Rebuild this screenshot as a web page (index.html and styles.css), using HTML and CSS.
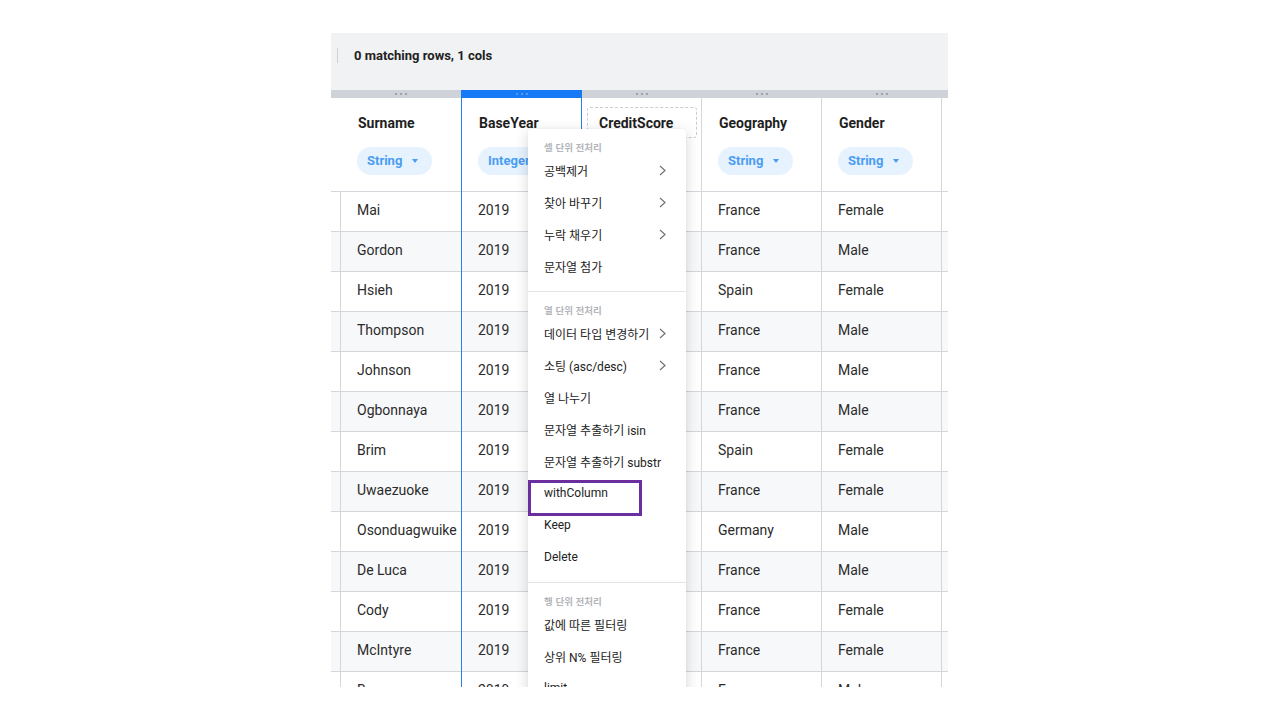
FILE: index.html
```html
<!DOCTYPE html>
<html lang="ko">
<head>
<meta charset="utf-8">
<link rel="stylesheet" href="styles.css">
</head>
<body>
<div class="frame">
  <div class="toolbar">
    <span class="tb-divider"></span>
    <span class="tb-text">0 matching rows, 1 cols</span>
  </div>
  <div class="strips">
    <div class="strip w-gutter"></div>
    <div class="strip w-col"><i></i><i></i><i></i></div>
    <div class="strip w-sel sel"><i></i><i></i><i></i></div>
    <div class="strip w-col"><i></i><i></i><i></i></div>
    <div class="strip w-col"><i></i><i></i><i></i></div>
    <div class="strip w-col"><i></i><i></i><i></i></div>
    <div class="strip w-fill"></div>
  </div>
  <div class="grid">
    <div class="col gutter">
      <div class="head"></div>
      <div class="cell"></div><div class="cell"></div><div class="cell"></div><div class="cell"></div><div class="cell"></div><div class="cell"></div><div class="cell"></div><div class="cell"></div><div class="cell"></div><div class="cell"></div><div class="cell"></div><div class="cell"></div><div class="cell"></div>
    </div>
    <div class="col c-surname">
      <div class="head"><div class="title">Surname</div><div class="pill">String<span class="caret"></span></div></div>
      <div class="cell">Mai</div><div class="cell">Gordon</div><div class="cell">Hsieh</div><div class="cell">Thompson</div><div class="cell">Johnson</div><div class="cell">Ogbonnaya</div><div class="cell">Brim</div><div class="cell">Uwaezuoke</div><div class="cell">Osonduagwuike</div><div class="cell">De Luca</div><div class="cell">Cody</div><div class="cell">McIntyre</div><div class="cell">Bearce</div>
    </div>
    <div class="col c-sel">
      <div class="head"><div class="title">BaseYear</div><div class="pill">Integer<span class="caret"></span></div></div>
      <div class="cell">2019</div><div class="cell">2019</div><div class="cell">2019</div><div class="cell">2019</div><div class="cell">2019</div><div class="cell">2019</div><div class="cell">2019</div><div class="cell">2019</div><div class="cell">2019</div><div class="cell">2019</div><div class="cell">2019</div><div class="cell">2019</div><div class="cell">2019</div>
    </div>
    <div class="col c-bordered">
      <div class="head"><div class="drop-box"></div><div class="title">CreditScore</div></div>
      <div class="cell"></div><div class="cell"></div><div class="cell"></div><div class="cell"></div><div class="cell"></div><div class="cell"></div><div class="cell"></div><div class="cell"></div><div class="cell"></div><div class="cell"></div><div class="cell"></div><div class="cell"></div><div class="cell"></div>
    </div>
    <div class="col c-bordered">
      <div class="head"><div class="title">Geography</div><div class="pill">String<span class="caret"></span></div></div>
      <div class="cell">France</div><div class="cell">France</div><div class="cell">Spain</div><div class="cell">France</div><div class="cell">France</div><div class="cell">France</div><div class="cell">Spain</div><div class="cell">France</div><div class="cell">Germany</div><div class="cell">France</div><div class="cell">France</div><div class="cell">France</div><div class="cell">France</div>
    </div>
    <div class="col c-bordered">
      <div class="head"><div class="title">Gender</div><div class="pill">String<span class="caret"></span></div></div>
      <div class="cell">Female</div><div class="cell">Male</div><div class="cell">Female</div><div class="cell">Male</div><div class="cell">Male</div><div class="cell">Male</div><div class="cell">Female</div><div class="cell">Female</div><div class="cell">Male</div><div class="cell">Male</div><div class="cell">Female</div><div class="cell">Female</div><div class="cell">Male</div>
    </div>
    <div class="col filler">
      <div class="head"></div>
      <div class="cell"></div><div class="cell"></div><div class="cell"></div><div class="cell"></div><div class="cell"></div><div class="cell"></div><div class="cell"></div><div class="cell"></div><div class="cell"></div><div class="cell"></div><div class="cell"></div><div class="cell"></div><div class="cell"></div>
    </div>
  </div>

  <div class="menu">
    <div class="section">
      <div class="label">셀 단위 전처리</div>
      <div class="item">공백제거<svg class="chev" viewBox="0 0 7 11"><polyline points="1,1 6,5.5 1,10"/></svg></div>
      <div class="item">찾아 바꾸기<svg class="chev" viewBox="0 0 7 11"><polyline points="1,1 6,5.5 1,10"/></svg></div>
      <div class="item">누락 채우기<svg class="chev" viewBox="0 0 7 11"><polyline points="1,1 6,5.5 1,10"/></svg></div>
      <div class="item">문자열 첨가</div>
    </div>
    <div class="section">
      <div class="label">열 단위 전처리</div>
      <div class="item">데이터 타입 변경하기<svg class="chev" viewBox="0 0 7 11"><polyline points="1,1 6,5.5 1,10"/></svg></div>
      <div class="item">소팅 (asc/desc)<svg class="chev" viewBox="0 0 7 11"><polyline points="1,1 6,5.5 1,10"/></svg></div>
      <div class="item">열 나누기</div>
      <div class="item">문자열 추출하기 isin</div>
      <div class="item">문자열 추출하기 substr</div>
      <div class="item">withColumn<span class="hl-box"></span></div>
      <div class="item">Keep</div>
      <div class="item">Delete</div>
    </div>
    <div class="section">
      <div class="label">행 단위 전처리</div>
      <div class="item">값에 따른 필터링</div>
      <div class="item">상위 N% 필터링</div>
      <div class="item">limit</div>
    </div>
  </div>
</div>
</body>
</html>
```

FILE: styles.css
```css
* { box-sizing: border-box; }
html, body { margin: 0; padding: 0; background: #ffffff; }
body {
  font-family: Roboto, "Noto Sans CJK KR", sans-serif;
  color: #222;
}

.frame {
  position: relative;
  margin: 33px 0 0 331px;
  width: 617px;
  height: 654px;
  overflow: hidden;
  background: #fff;
}

.toolbar {
  height: 57px;
  background: #f1f2f4;
  display: flex;
  align-items: flex-start;
  padding: 15px 0 0 6px;
}
.tb-divider {
  width: 1px;
  height: 15px;
  background: #cfd2d6;
}
.tb-text {
  margin-left: 16px;
  font-size: 13px;
  font-weight: 700;
  line-height: 15px;
  color: #222;
}

.strips {
  display: flex;
  height: 8px;
}
.strip {
  background: #cfd3d9;
  display: flex;
  justify-content: center;
  align-items: center;
  gap: 3px;
}
.strip i {
  width: 2px;
  height: 2px;
  border-radius: 1px;
  background: #8d929b;
}
.strip.sel { background: #1679f5; }
.strip.sel i { background: #6aa6ee; }
.w-gutter { width: 10px; }
.w-col { width: 120px; }
.w-sel { width: 121px; }
.w-fill { width: 6px; }

.grid {
  display: flex;
}
.col {
  display: flex;
  flex-direction: column;
  width: 120px;
}
.gutter { width: 10px; border-right: 1px solid #d3d6db; }
.c-surname { width: 120px; }
.c-sel { width: 121px; border-left: 1px solid #2a7fe6; border-right: 1px solid #2a7fe6; }
.c-bordered { width: 120px; border-right: 1px solid #d3d6db; }
.filler { width: 6px; }

.head {
  position: relative;
  height: 94px;
  padding: 16px 0 0 16px;
  border-bottom: 1px solid #d3d6db;
  background: #fff;
}
.title {
  font-size: 14px;
  font-weight: 700;
  line-height: 18px;
  color: #1f1f1f;
  white-space: nowrap;
  position: relative;
  padding-left: 1px;
}
.pill {
  display: inline-flex;
  align-items: center;
  margin-top: 15px;
  height: 28px;
  padding: 0 14px 2px 10px;
  border-radius: 14px;
  background: #e6f3fe;
  color: #4a9df2;
  font-size: 13px;
  font-weight: 700;
  white-space: nowrap;
}
.caret {
  margin-left: 10px;
  margin-top: 2px;
  width: 0;
  height: 0;
  border-left: 3.5px solid transparent;
  border-right: 3.5px solid transparent;
  border-top: 4px solid #4a9df2;
}
.drop-box {
  position: absolute;
  left: 5px;
  top: 9px;
  width: 110px;
  height: 31px;
  border: 1px dashed #c9ccd1;
  border-radius: 3px;
}

.cell {
  height: 40px;
  padding-left: 16px;
  padding-bottom: 4px;
  border-bottom: 1px solid #d3d6db;
  display: flex;
  align-items: center;
  font-size: 14px;
  color: #2b2b2b;
  white-space: nowrap;
  overflow: hidden;
  background: #fff;
}
.head + .cell ~ .cell:nth-child(odd) { background: #f7f8fa; }
.gutter .cell, .filler .cell { padding-left: 0; }

.menu {
  position: absolute;
  left: 197px;
  top: 96px;
  width: 158px;
  height: 640px;
  background: #fff;
  border-radius: 3px;
  box-shadow: 0 3px 14px rgba(0, 0, 0, 0.16), 0 0 2px rgba(0, 0, 0, 0.06);
}
.section {
  padding-top: 11px;
  padding-bottom: 9px;
  border-bottom: 1px solid #e2e4e8;
}
.label {
  height: 14px;
  line-height: 14px;
  padding-left: 16px;
  font-size: 9.5px;
  font-weight: 700;
  color: #b3b6bb;
  font-family: "Noto Sans CJK KR", sans-serif;
}
.item {
  position: relative;
  height: 32px;
  display: flex;
  align-items: center;
  padding-left: 16px;
  font-size: 12px;
  color: #222;
  white-space: nowrap;
}
.chev {
  position: absolute;
  left: 131px;
  top: 11px;
  width: 7px;
  height: 11px;
  fill: none;
  stroke: #6f7277;
  stroke-width: 1.2;
}
.hl-box {
  position: absolute;
  left: 0;
  top: 3px;
  width: 114px;
  height: 36px;
  border: 3px solid #6c2e9e;
}
```
